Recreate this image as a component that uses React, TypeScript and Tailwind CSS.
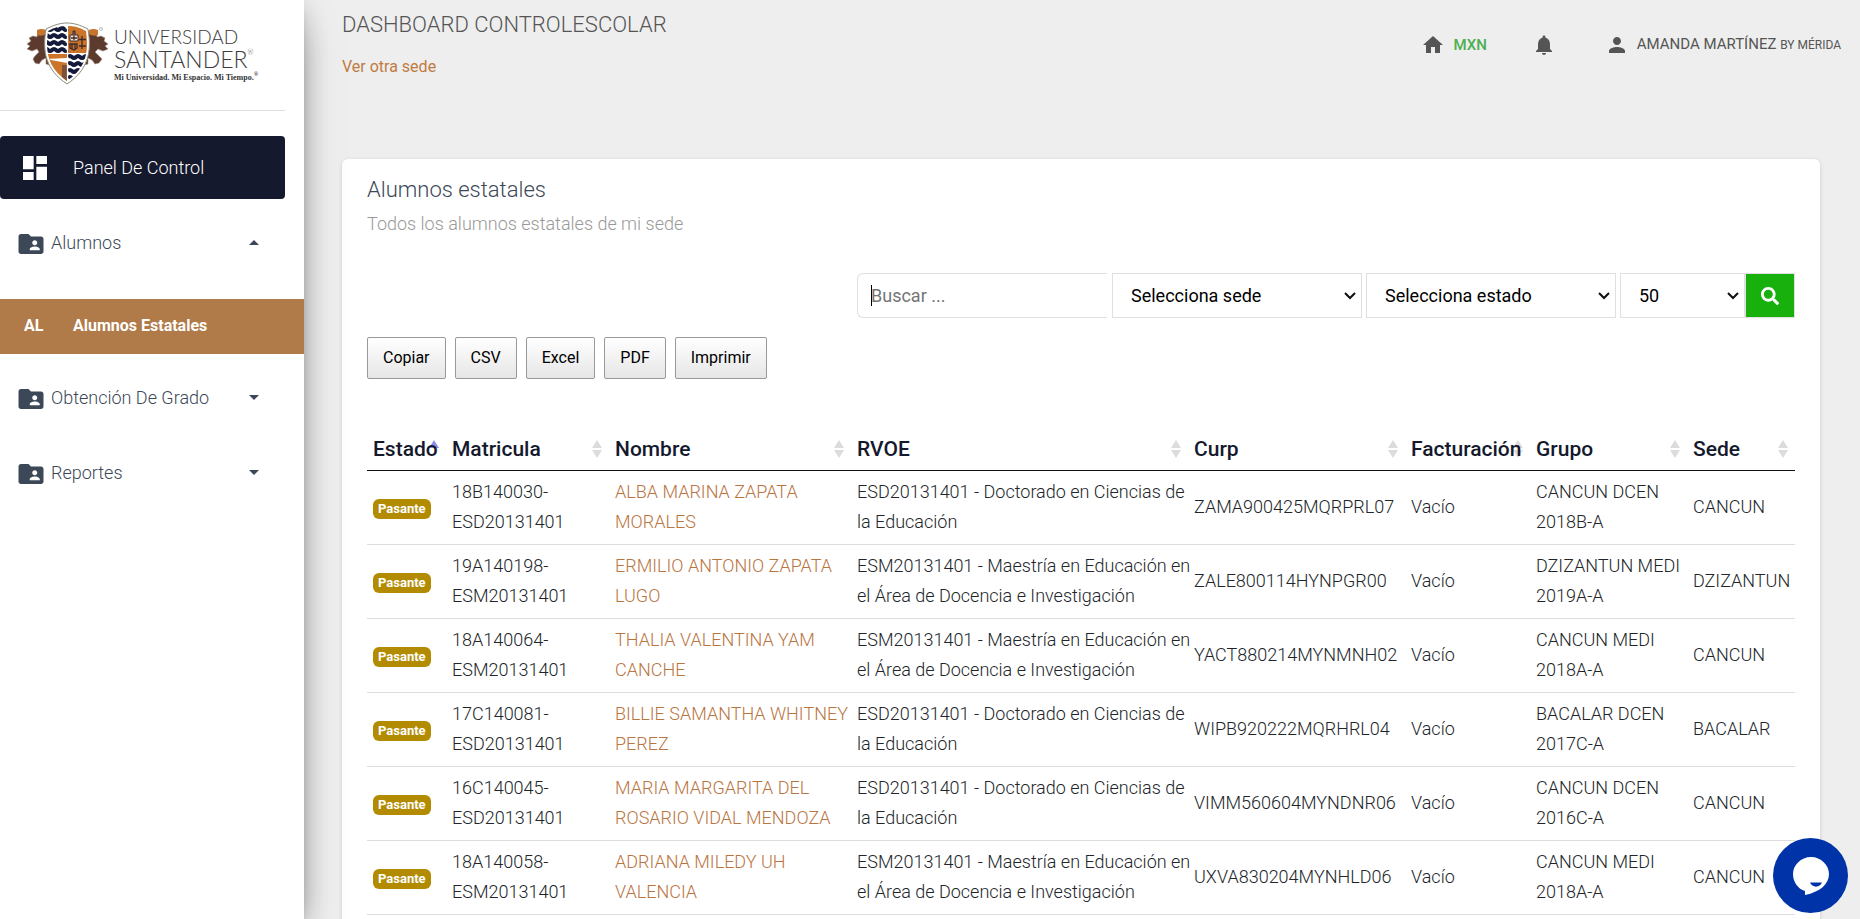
import type { ReactNode } from "react";
import { MdDashboard, MdFolderShared, MdHome, MdNotifications, MdPerson } from "react-icons/md";
import { FaSearch } from "react-icons/fa";

type Lines = [string, string];
type Row = { matricula: Lines; nombre: Lines; rvoe: Lines; curp: string; grupo: Lines; sede: string };

const DOCTORADO: Lines = ["ESD20131401 - Doctorado en Ciencias de", "la Educación"];
const MAESTRIA: Lines = ["ESM20131401 - Maestría en Educación en", "el Área de Docencia e Investigación"];

const rows: Row[] = [
  { matricula: ["18B140030-", "ESD20131401"], nombre: ["ALBA MARINA ZAPATA", "MORALES"], rvoe: DOCTORADO, curp: "ZAMA900425MQRPRL07", grupo: ["CANCUN DCEN", "2018B-A"], sede: "CANCUN" },
  { matricula: ["19A140198-", "ESM20131401"], nombre: ["ERMILIO ANTONIO ZAPATA", "LUGO"], rvoe: MAESTRIA, curp: "ZALE800114HYNPGR00", grupo: ["DZIZANTUN MEDI", "2019A-A"], sede: "DZIZANTUN" },
  { matricula: ["18A140064-", "ESM20131401"], nombre: ["THALIA VALENTINA YAM", "CANCHE"], rvoe: MAESTRIA, curp: "YACT880214MYNMNH02", grupo: ["CANCUN MEDI", "2018A-A"], sede: "CANCUN" },
  { matricula: ["17C140081-", "ESD20131401"], nombre: ["BILLIE SAMANTHA WHITNEY", "PEREZ"], rvoe: DOCTORADO, curp: "WIPB920222MQRHRL04", grupo: ["BACALAR DCEN", "2017C-A"], sede: "BACALAR" },
  { matricula: ["16C140045-", "ESD20131401"], nombre: ["MARIA MARGARITA DEL", "ROSARIO VIDAL MENDOZA"], rvoe: DOCTORADO, curp: "VIMM560604MYNDNR06", grupo: ["CANCUN DCEN", "2016C-A"], sede: "CANCUN" },
  { matricula: ["18A140058-", "ESM20131401"], nombre: ["ADRIANA MILEDY UH", "VALENCIA"], rvoe: MAESTRIA, curp: "UXVA830204MYNHLD06", grupo: ["CANCUN MEDI", "2018A-A"], sede: "CANCUN" },
];

const columns = [
  { label: "Estado", width: "w-[79px]" },
  { label: "Matricula", width: "w-[163px]" },
  { label: "Nombre", width: "w-[242px]" },
  { label: "RVOE", width: "w-[337px]" },
  { label: "Curp", width: "w-[217px]" },
  { label: "Facturación", width: "w-[125px]" },
  { label: "Grupo", width: "w-[157px]" },
  { label: "Sede", width: "w-[108px]" },
];

function Crest() {
  return (
    <svg viewBox="0 0 90 70" className="h-[70px] w-[90px] shrink-0" aria-hidden="true">
      <g fill="#5d3a2e" stroke="#9b8a78" strokeWidth="0.6">
        <path d="M26 14 L14 13 L13 19 L9 18 L5 20 L7 23 L3 26 L6 28 L3 31 L8 33 L13 31 L15 34 L11 38 L9 41 L11 45 L15 46 L18 42 L22 40 L22 46 L30 48 Z" />
        <path d="M60 14 L72 13 L73 19 L77 18 L81 20 L80 23 L84 26 L81 28 L84 31 L79 33 L74 31 L71 34 L75 38 L78 41 L75 45 L71 46 L68 42 L64 40 L64 46 L56 48 Z" />
      </g>
      <path d="M13 12 q4 -2 9 0 v4 q-5 3 -9 1 Z M65 12 q4 -2 9 0 v5 q-5 2 -9 -1 Z" fill="#c8742c" />
      <path d="M43 5 C36 5 30 7 22 11 C18 34 22 52 43 66 C64 52 68 34 64 11 C56 7 50 5 43 5 Z" fill="#fff" stroke="#8b8a78" strokeWidth="1" />
      <clipPath id="crest-shield">
        <path d="M43 8 C36 8 31 9 24 13 C21 34 24 50 43 63 C62 50 65 34 62 13 C55 9 50 8 43 8 Z" />
      </clipPath>
      <g clipPath="url(#crest-shield)">
        <rect x="44" y="6" width="22" height="29" fill="#cb752b" />
        <rect x="20" y="36" width="23" height="30" fill="#cb752b" />
        <path d="M22 41 L43 40 V45 Z" fill="#fff" />
        <path d="M38 47 h5 v18 h-5 Z" fill="#7c5138" />
        <g stroke="#15193a" strokeWidth="4" fill="none">
          <path d="M20 11 q2 -2 4 0 t4 0 t4 0 t4 0 t4 0 t3 0" />
          <path d="M20 18 q2 -2 4 0 t4 0 t4 0 t4 0 t4 0 t3 0" />
          <path d="M20 25 q2 -2 4 0 t4 0 t4 0 t4 0 t4 0 t3 0" />
          <path d="M20 32 q2 -2 4 0 t4 0 t4 0 t4 0 t4 0 t3 0" />
          <path d="M44 39 q2 -2 4 0 t4 0 t4 0 t4 0 t4 0" />
          <path d="M44 46 q2 -2 4 0 t4 0 t4 0 t4 0 t4 0" />
          <path d="M44 53 q2 -2 4 0 t4 0 t4 0 t4 0 t4 0" />
          <path d="M44 60 q2 -2 4 0 t4 0 t4 0 t4 0 t4 0" />
        </g>
        <path d="M46 17 h3 v-4 h2 v4 h3 v6 h-8 Z" fill="#f4e6da" stroke="#3f2a2b" strokeWidth="1" />
        <g stroke="#3f2a2b" strokeWidth="1.3" fill="none">
          <path d="M50 13 v9 M47 20 h6 M58 18 v7 M55 21.500 h7 M58 25 v6 M55 28 h7" />
          <path d="M46 26 h7 v4 l-3 2 l-4 -2 Z M48 26 v5 M51 26 v5" />
        </g>
      </g>
      <path d="M43.500 8 V63 M23 35.500 H63" stroke="#fff" strokeWidth="1.2" />
      <circle cx="77" cy="11" r="1.500" fill="none" stroke="#aaa" strokeWidth="0.8" />
    </svg>
  );
}

function Logo() {
  return (
    <a href="#" className="flex h-[110px] items-start pt-[18px] pl-6 text-[#3c3c3c]">
      <Crest />
      <span className="flex flex-col font-[Lato,'Liberation_Sans',sans-serif] leading-none font-light whitespace-nowrap">
        <span className="pt-2 text-[19px] leading-[22px]">UNIVERSIDAD</span>
        <span className="flex text-[23px] leading-[22px]">
          SANTANDER<span className="text-[7px] leading-2">®</span>
        </span>
        <span className="flex font-['Liberation_Serif',serif] text-[8px] leading-4 font-bold text-[#333]">
          Mi Universidad. Mi Espacio. Mi Tiempo.<span className="text-[6px] leading-2">®</span>
        </span>
      </span>
    </a>
  );
}

function MenuItem({ label, open = false }: { label: string; open?: boolean }) {
  return (
    <button type="button" className="mr-[19px] flex h-[63px] items-center pr-[26px] pl-4 text-left text-[18px] font-light text-[#3c4858]">
      <MdFolderShared className="mt-[2px] size-[30px] shrink-0" />
      <span className="ml-[5px] flex-1">{label}</span>
      <svg viewBox="0 0 10 5" className="h-[5px] w-[10px]" aria-hidden="true">
        <path d={open ? "M0 5 L5 0 L10 5 Z" : "M0 0 L5 5 L10 0 Z"} fill="#3c4858" />
      </svg>
    </button>
  );
}

function Sidebar() {
  return (
    <nav className="z-10 flex w-[304px] shrink-0 flex-col bg-white shadow-[0_16px_38px_-12px_rgba(0,0,0,0.56),0_4px_25px_0_rgba(0,0,0,0.12),0_8px_10px_-5px_rgba(0,0,0,0.2)]">
      <Logo />
      <div className="mr-[19px] border-t border-[#dfdfdf]" />
      <a href="#" className="mt-[25px] mr-[19px] flex h-[63px] items-center rounded bg-[#15192d] pl-[19px] text-[18px] font-light text-white">
        <MdDashboard className="mr-[22px] size-8" />
        Panel De Control
      </a>
      <div className="mt-3 flex flex-col">
        <MenuItem label="Alumnos" open />
        <a href="#" className="mt-[25px] flex h-[55px] items-center bg-[#b17a49] pb-[2px] pl-6 text-[16px] font-bold text-white">
          <span className="w-[49px]">AL</span>Alumnos Estatales
        </a>
        <div className="mt-3 flex flex-col gap-3">
          <MenuItem label="Obtención De Grado" />
          <MenuItem label="Reportes" />
        </div>
      </div>
    </nav>
  );
}

function Header() {
  return (
    <header className="flex h-[159px] items-start justify-between pr-[19px] pl-[38px] text-[#555]">
      <div>
        <h1 className="pt-[9px] text-[22px] leading-8 font-light">DASHBOARD CONTROLESCOLAR</h1>
        <a href="#" className="mt-3 block text-[16px] leading-7 text-[#c07b42]">Ver otra sede</a>
      </div>
      <div className="flex items-center pt-8">
        <a href="#" className="flex items-center gap-2 text-[15px] leading-6 font-medium text-[#4caf50]">
          <MdHome className="size-6 text-[#555]" />
          MXN
        </a>
        <button type="button" aria-label="Notificaciones" className="ml-[45px]">
          <MdNotifications className="size-6" />
        </button>
        <a href="#" className="ml-[49px] flex items-center gap-2 text-[15px] leading-6">
          <MdPerson className="size-6" />
          <span>AMANDA MARTÍNEZ <span className="text-[12px]">BY MÉRIDA</span></span>
        </a>
      </div>
    </header>
  );
}

function Select({ label, value, width }: { label: string; value: string; width: string }) {
  return (
    <span className={`relative flex ${width}`}>
      <select aria-label={label} className="h-[45px] w-full appearance-none border border-[#e0e0e0] bg-white pr-8 pl-[18px] text-[18px] text-black">
        <option>{value}</option>
      </select>
      <svg viewBox="0 0 12 8" className="pointer-events-none absolute top-[19px] right-[6px] h-2 w-3" fill="none" stroke="#111" strokeWidth="2" aria-hidden="true">
        <path d="M1 1 L6 6 L11 1" />
      </svg>
    </span>
  );
}

function SearchBar() {
  return (
    <form className="mt-[34px] flex justify-end" onSubmit={(e) => e.preventDefault()}>
      <span className="relative flex w-[250px]">
        <input aria-label="Buscar" placeholder="Buscar ..." className="h-[45px] w-full rounded-l-md border border-r-0 border-[#e0e0e0] bg-white pl-[13px] text-[18px] placeholder:text-[#757575]" />
        <span className="absolute top-3 left-[14px] h-[21px] w-px bg-black" />
      </span>
      <span className="ml-[5px] flex gap-1">
        <Select label="Sede" value="Selecciona sede" width="w-[250px]" />
        <Select label="Estado" value="Selecciona estado" width="w-[250px]" />
        <Select label="Registros" value="50" width="w-[125px]" />
      </span>
      <button type="submit" aria-label="Buscar" className="flex h-[45px] w-[50px] items-center justify-center border border-[#e0e0e0] bg-[#17b00c] text-white">
        <FaSearch className="size-[18px]" />
      </button>
    </form>
  );
}

function ExportButton({ children }: { children: ReactNode }) {
  return (
    <button type="button" className="h-[42px] rounded-xs border border-[#999] bg-linear-to-b from-white to-[#e6e6e6] px-[15px] text-[16px] text-black">
      {children}
    </button>
  );
}

function TwoLines({ lines }: { lines: Lines }) {
  return (
    <>
      {lines[0]}
      <br />
      {lines[1]}
    </>
  );
}

function StudentTable() {
  return (
    <table className="mt-[46px] w-full table-fixed border-collapse text-[18px] leading-[30px] font-light whitespace-nowrap text-[#212529]">
      <thead>
        <tr className="border-b border-[#111]">
          {columns.map(({ label, width }, i) => (
            <th key={label} scope="col" className={`relative h-[45px] ${width} pt-[3px] pl-[6px] text-left text-[21px] font-medium text-[#15192d]`}>
              <svg viewBox="0 0 10 18" className="absolute top-[15px] right-[7px] h-[18px] w-[10px]" aria-hidden="true">
                <path d="M0 8 L5 0 L10 8 Z" fill={i === 0 ? "#8f8fe6" : "#dcdcdc"} />
                {i > 0 && <path d="M0 10 L5 18 L10 10 Z" fill="#dcdcdc" />}
              </svg>
              <span className="relative">{label}</span>
            </th>
          ))}
        </tr>
      </thead>
      <tbody>
        {rows.map((r) => (
          <tr key={r.curp} className="border-b border-[#ddd] *:pt-[6px] *:pb-[7px] *:pl-[6px]">
            <td>
              <span className="inline-block rounded-md bg-[#b38b00] px-[5px] text-[13px] leading-5 font-bold text-white">Pasante</span>
            </td>
            <td><TwoLines lines={r.matricula} /></td>
            <td><a href="#" className="text-[#b9753f]"><TwoLines lines={r.nombre} /></a></td>
            <td><TwoLines lines={r.rvoe} /></td>
            <td>{r.curp}</td>
            <td>Vacío</td>
            <td><TwoLines lines={r.grupo} /></td>
            <td>{r.sede}</td>
          </tr>
        ))}
      </tbody>
    </table>
  );
}

export default function App() {
  return (
    <div className="flex h-screen overflow-hidden bg-[#eee] font-[Roboto,'Liberation_Sans',sans-serif]">
      <Sidebar />
      <div className="min-w-0 flex-1">
        <Header />
        <main className="mr-10 ml-[38px] rounded-md bg-white px-[25px] pt-[15px] pb-10 shadow-[0_1px_4px_0_rgba(0,0,0,0.14)]">
          <h2 className="text-[22px] leading-8 font-light text-[#3c4858]">Alumnos estatales</h2>
          <p className="mt-[3px] text-[18px] leading-[30px] font-light text-[#999]">Todos los alumnos estatales de mi sede</p>
          <SearchBar />
          <div className="mt-[19px] flex gap-[9px]">
            <ExportButton>Copiar</ExportButton>
            <ExportButton>CSV</ExportButton>
            <ExportButton>Excel</ExportButton>
            <ExportButton>PDF</ExportButton>
            <ExportButton>Imprimir</ExportButton>
          </div>
          <StudentTable />
        </main>
      </div>
      <button type="button" aria-label="Abrir chat" className="fixed right-3 bottom-[6px] z-20 size-[75px] rounded-full bg-[#0033a7]">
        <svg viewBox="0 0 75 75" className="size-[75px]" aria-hidden="true">
          <path d="M38 19 C48 19 56 27 56 36 C56 46 47 54 32 57 L32 53 C25 51 20 44 20 36 C20 27 28 19 38 19 Z" fill="#fff" />
          <path d="M37 44.500 H49 C47 50 39 50 37 44.500 Z" fill="#0033a7" />
        </svg>
      </button>
    </div>
  );
}
